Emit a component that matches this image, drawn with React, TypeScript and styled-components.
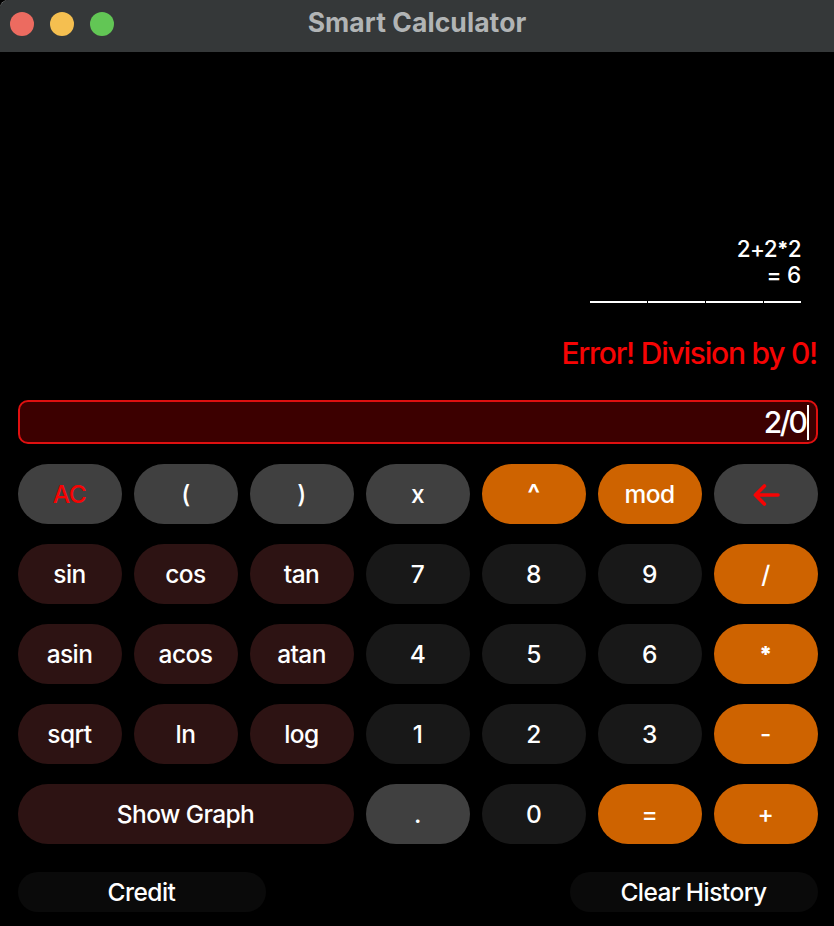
import React from "react";
import styled, { createGlobalStyle } from "styled-components";

const GlobalStyle = createGlobalStyle`
  * { box-sizing: border-box; }
  html, body { margin: 0; padding: 0; background: #000; }
  body { font-family: Inter, "Liberation Sans", sans-serif; color: #fff; }
`;

const Window = styled.main`
  width: 834px;
  height: 926px;
  display: flex;
  flex-direction: column;
  background: #000;
  overflow: hidden;
`;

const TitleBar = styled.header`
  display: grid;
  grid-template-columns: 1fr auto 1fr;
  align-items: center;
  height: 52px;
  flex: none;
  padding: 0 10px 4px;
  border-radius: 8px 0 0 0;
  background:
    radial-gradient(circle at 10px 10px, transparent 10px, #77797a 10.6px) 0 0 / 10px 10px no-repeat,
    #353839;
`;

const TrafficLights = styled.div`
  display: flex;
  gap: 16px;
`;

const Light = styled.span<{ $color: string }>`
  width: 24px;
  height: 24px;
  border-radius: 50%;
  background: ${(p) => p.$color};
`;

const Title = styled.h1`
  margin: 0 0 4px;
  font-size: 26.5px;
  line-height: 32px;
  font-weight: 700;
  letter-spacing: 0.07px;
  color: #b1b4b5;
`;

const Body = styled.div`
  display: flex;
  flex-direction: column;
  flex: 1;
  padding: 0 16px 14px 18px;
`;

const History = styled.section`
  display: flex;
  flex-direction: column;
  align-items: flex-end;
  justify-content: flex-end;
  height: 264px;
  padding: 0 17px 13px 0;
  font-size: 22.5px;
  line-height: 26px;
  font-weight: 500;
`;

const HistoryLine = styled.div<{ $spacing: number }>`
  height: 26px;
  letter-spacing: ${(p) => p.$spacing}px;
`;

const Star = styled.span`
  font-size: 0.88em;
  font-weight: 800;
  line-height: 1;
  vertical-align: 1px;
`;

const Divider = styled.div`
  display: grid;
  grid-template-columns: 57px 57px 57px 37px;
  gap: 1px;
  height: 2px;
  margin-top: 13px;
`;

const Dash = styled.span`
  background: #fff;
`;

const ErrorMessage = styled.p`
  margin: 0;
  height: 84px;
  padding: 19px 1px 0 0;
  text-align: right;
  font-size: 30px;
  font-weight: 500;
  line-height: 36px;
  letter-spacing: -1.24px;
  color: #f60404;
`;

const Display = styled.div`
  display: flex;
  align-items: center;
  justify-content: flex-end;
  height: 44px;
  padding-right: 7px;
  border: 2px solid #e01010;
  border-radius: 10px;
  background: #3c0000;
  font-size: 30px;
  font-weight: 500;
  letter-spacing: -2.4px;
`;

const Caret = styled.span`
  width: 2px;
  height: 35px;
  margin-left: 1.6px;
  background: #fff;
`;

const Keypad = styled.div`
  display: grid;
  grid-template-columns: repeat(7, 104px);
  grid-auto-rows: 60px;
  gap: 20px 12px;
  margin-top: 20px;
`;

type Tone = "gray" | "dark" | "maroon" | "orange";
const tones: Record<Tone, string> = {
  gray: "#404040",
  dark: "#181818",
  maroon: "#2d1313",
  orange: "#ce6300",
};

const Key = styled.button<{ $tone: Tone; $span?: number; $red?: boolean; $weight?: number; $size?: number }>`
  display: flex;
  align-items: center;
  justify-content: center;
  grid-column: span ${(p) => p.$span ?? 1};
  padding: 0 1px 0 0;
  border: 0;
  border-radius: 30px;
  background: ${(p) => tones[p.$tone]};
  color: ${(p) => (p.$red ? "#f60404" : "#fff")};
  font: ${(p) => p.$weight ?? 500} ${(p) => p.$size ?? 24.5}px/32px Inter, "Liberation Sans", sans-serif;
  letter-spacing: -0.57px;
`;

const Footer = styled.footer`
  display: flex;
  justify-content: space-between;
  margin-top: 28px;
`;

const FooterButton = styled.button`
  width: 248px;
  height: 40px;
  padding: 0 1px 0 0;
  border: 0;
  border-radius: 20px;
  background: #0a0a0a;
  color: #fff;
  font: 500 24.5px/32px Inter, "Liberation Sans", sans-serif;
  letter-spacing: -0.54px;
`;

const BackArrow = () => (
  <svg width="28" height="24" viewBox="0 0 28 24" fill="none" stroke="#f60404" strokeWidth="3.6" strokeLinecap="round" strokeLinejoin="round">
    <path d="M26 13H3.4M12.4 4L3.4 13L12.4 22" />
  </svg>
);

interface KeyDef {
  label: string;
  tone: Tone;
  span?: number;
  red?: boolean;
  weight?: number;
  size?: number;
}

const keys: KeyDef[] = [
  { label: "AC", tone: "gray", red: true },
  { label: "(", tone: "gray" },
  { label: ")", tone: "gray" },
  { label: "x", tone: "gray" },
  { label: "^", tone: "orange", weight: 600, size: 27 },
  { label: "mod", tone: "orange" },
  { label: "back", tone: "gray" },
  { label: "sin", tone: "maroon" },
  { label: "cos", tone: "maroon" },
  { label: "tan", tone: "maroon" },
  { label: "7", tone: "dark" },
  { label: "8", tone: "dark" },
  { label: "9", tone: "dark" },
  { label: "/", tone: "orange" },
  { label: "asin", tone: "maroon" },
  { label: "acos", tone: "maroon" },
  { label: "atan", tone: "maroon" },
  { label: "4", tone: "dark" },
  { label: "5", tone: "dark" },
  { label: "6", tone: "dark" },
  { label: "*", tone: "orange", weight: 900, size: 22 },
  { label: "sqrt", tone: "maroon" },
  { label: "ln", tone: "maroon" },
  { label: "log", tone: "maroon" },
  { label: "1", tone: "dark" },
  { label: "2", tone: "dark" },
  { label: "3", tone: "dark" },
  { label: "-", tone: "orange" },
  { label: "Show Graph", tone: "maroon", span: 3 },
  { label: ".", tone: "gray" },
  { label: "0", tone: "dark" },
  { label: "=", tone: "orange" },
  { label: "+", tone: "orange" },
];

export default function App() {
  return (
    <>
      <GlobalStyle />
      <Window>
        <TitleBar>
          <TrafficLights>
            <Light $color="#ec6b60" />
            <Light $color="#f5bf50" />
            <Light $color="#62c655" />
          </TrafficLights>
          <Title>Smart Calculator</Title>
        </TitleBar>
        <Body>
          <History>
            <HistoryLine $spacing={-0.65}>
              2+2<Star>*</Star>2
            </HistoryLine>
            <HistoryLine $spacing={-0.2}>= 6</HistoryLine>
            <Divider>
              <Dash />
              <Dash />
              <Dash />
              <Dash />
            </Divider>
          </History>
          <ErrorMessage>Error! Division by 0!</ErrorMessage>
          <Display>
            2/0
            <Caret />
          </Display>
          <Keypad>
            {keys.map((k) => (
              <Key key={k.label} $tone={k.tone} $span={k.span} $red={k.red} $weight={k.weight} $size={k.size}>
                {k.label === "back" ? <BackArrow /> : k.label}
              </Key>
            ))}
          </Keypad>
          <Footer>
            <FooterButton>Credit</FooterButton>
            <FooterButton>Clear History</FooterButton>
          </Footer>
        </Body>
      </Window>
    </>
  );
}
